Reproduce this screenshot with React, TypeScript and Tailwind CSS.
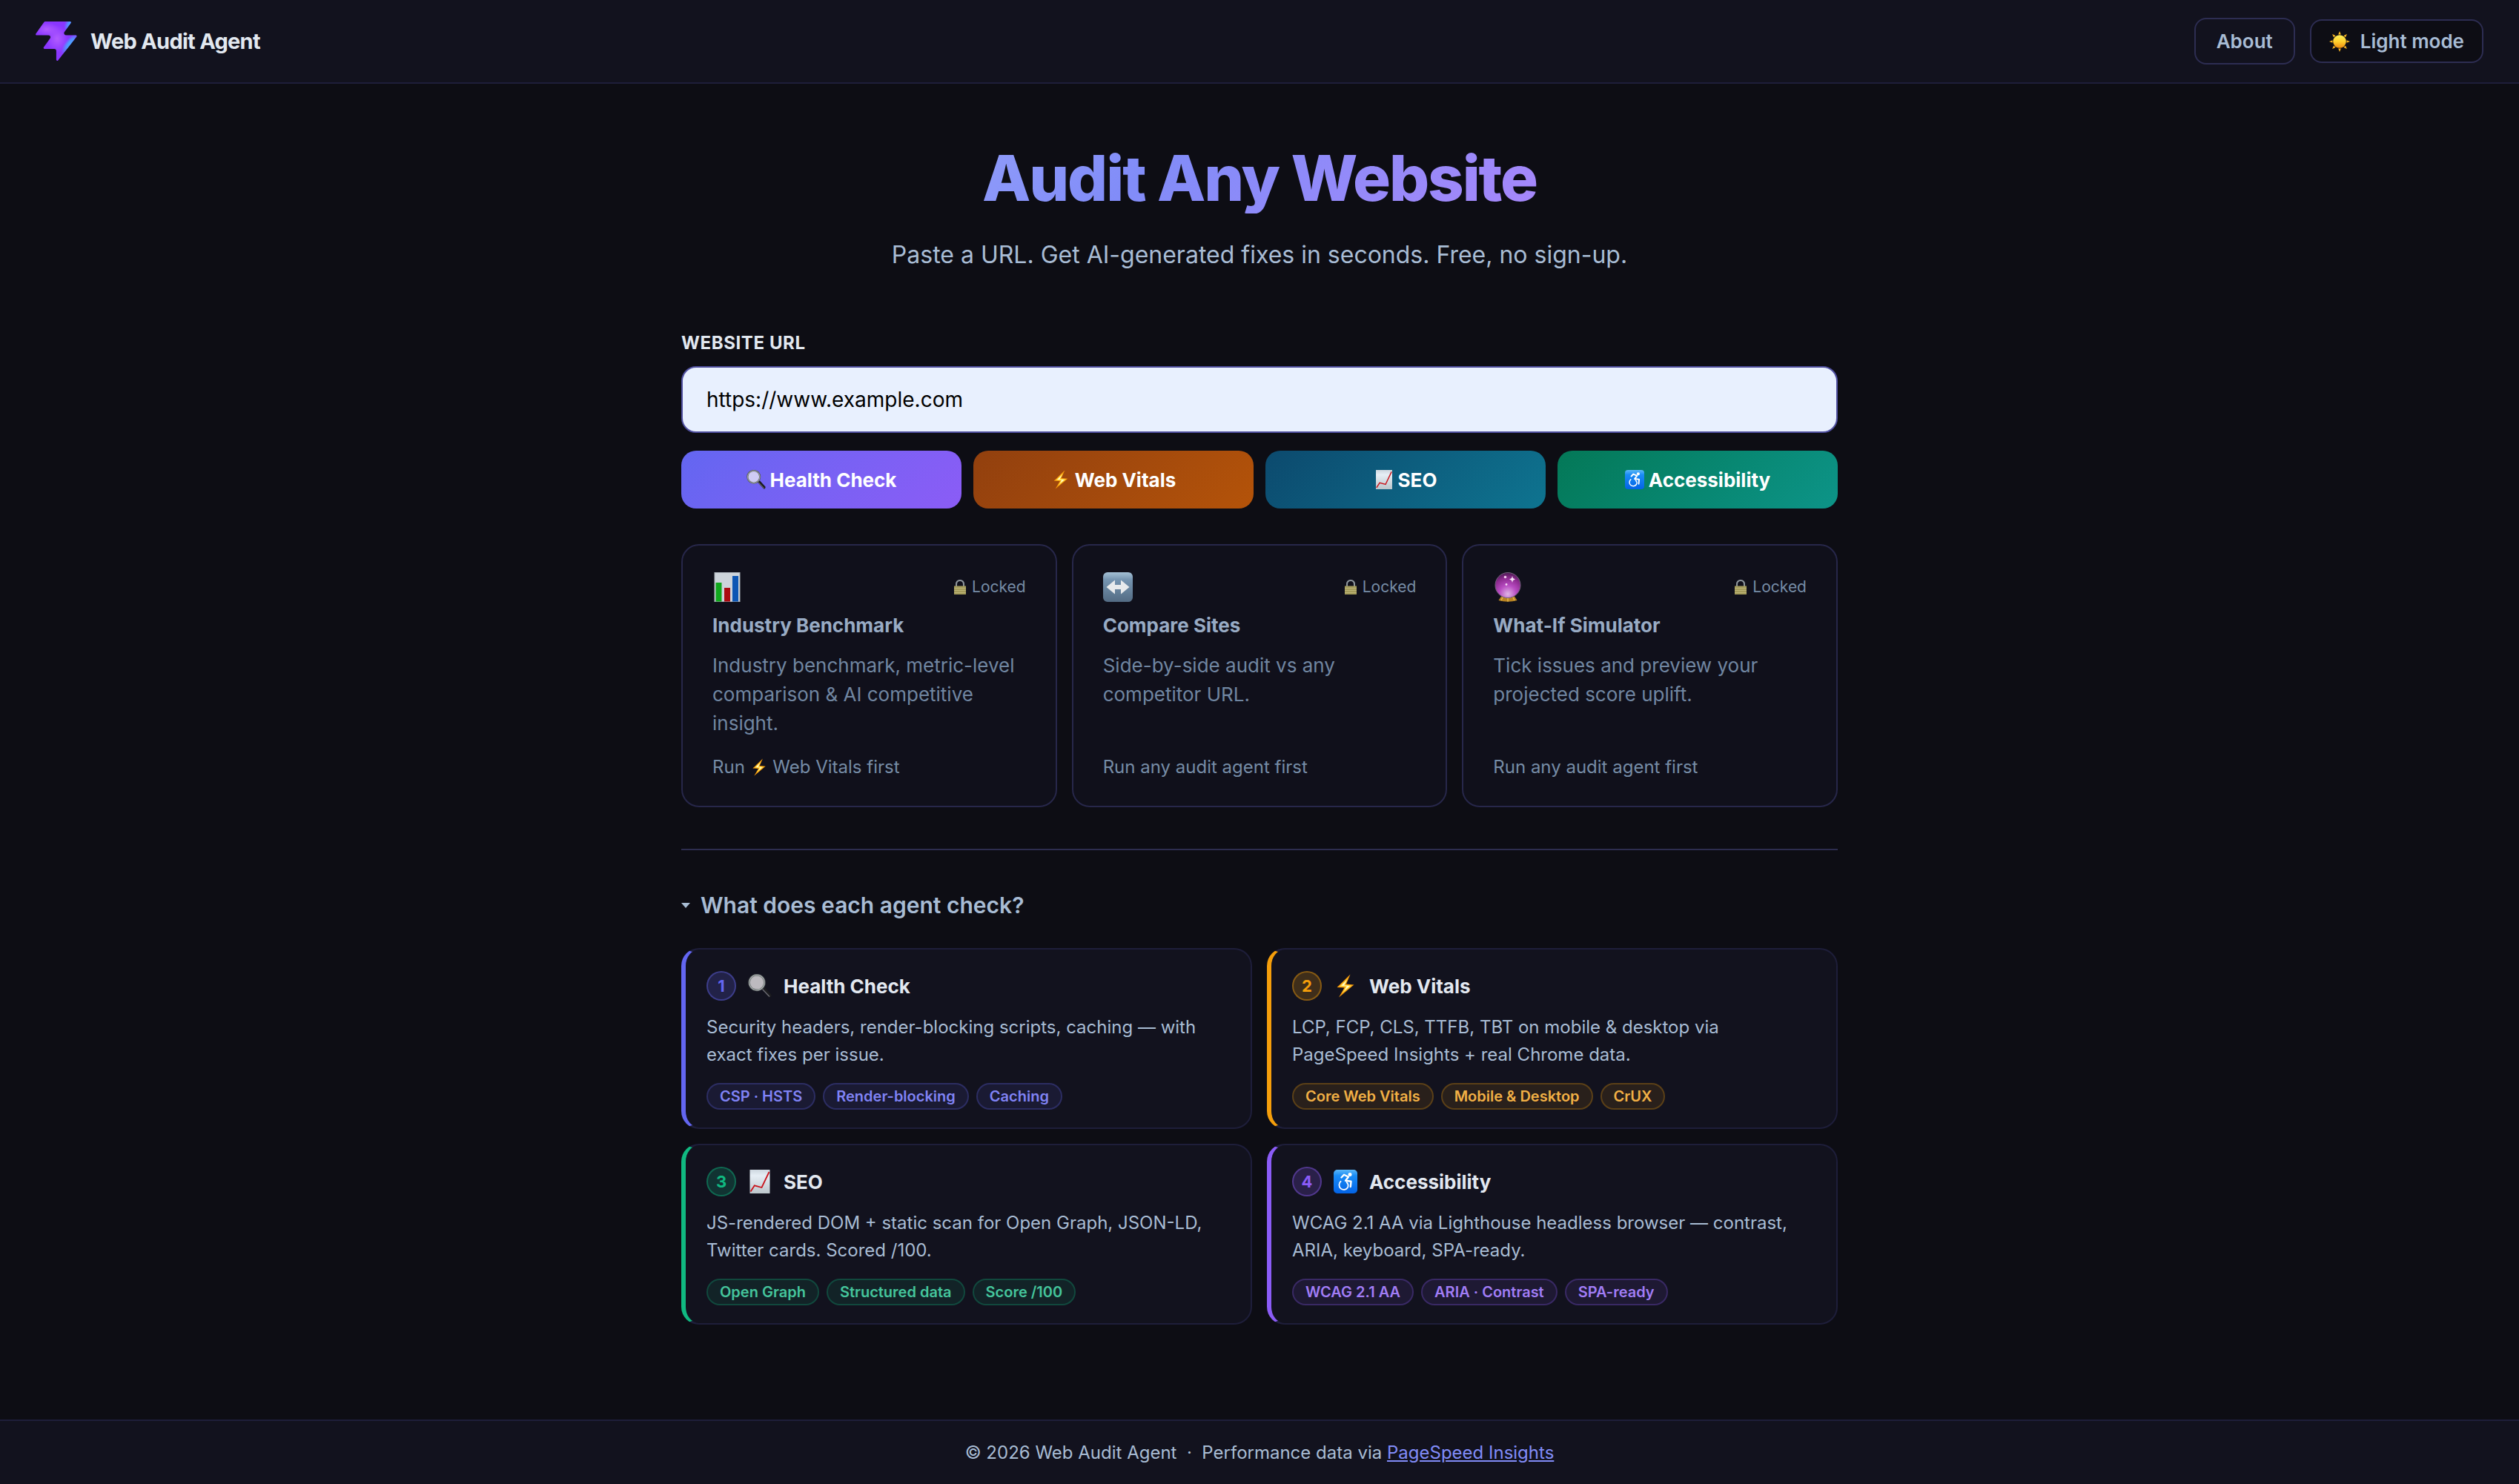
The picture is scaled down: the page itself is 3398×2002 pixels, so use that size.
import { useState } from "react"
import type { ReactNode } from "react"

interface LockedTool {
  icon: ReactNode
  name: string
  description: string
  hint: ReactNode
}

interface Agent {
  id: number
  icon: ReactNode
  name: string
  description: string
  tags: string[]
  border: string
  badge: string
  tag: string
}

function Logo() {
  return (
    <svg viewBox="0 0 48 46" className="w-14" aria-hidden="true">
      <defs>
        <clipPath id="bolt-shape">
          <path d="M25.946 44.938c-.664.845-2.021.375-2.021-.698V33.937a2.26 2.26 0 0 0-2.262-2.262H10.287c-.92 0-1.456-1.04-.92-1.788l7.48-10.471c1.07-1.497 0-3.578-1.842-3.578H1.237c-.92 0-1.456-1.04-.92-1.788L10.013.474c.214-.297.556-.474.92-.474h28.894c.92 0 1.456 1.04.92 1.788l-7.48 10.471c-1.07 1.498 0 3.579 1.842 3.579h11.377c.943 0 1.473 1.088.89 1.83L25.947 44.94z" />
        </clipPath>
        <radialGradient id="bolt-lilac">
          <stop offset="0" stopColor="#b15cff" />
          <stop offset="1" stopColor="#b15cff" stopOpacity="0" />
        </radialGradient>
        <radialGradient id="bolt-sky">
          <stop offset="0" stopColor="#47a8ff" />
          <stop offset="0.4" stopColor="#47a8ff" stopOpacity="0.85" />
          <stop offset="1" stopColor="#47a8ff" stopOpacity="0" />
        </radialGradient>
      </defs>
      <g clipPath="url(#bolt-shape)">
        <rect width="48" height="46" fill="#8a36ff" />
        <ellipse cx="13" cy="9" rx="14" ry="8" fill="url(#bolt-lilac)" />
        <ellipse cx="25" cy="20" rx="13" ry="16" fill="url(#bolt-lilac)" />
        <ellipse cx="41" cy="3" rx="7" ry="11" fill="url(#bolt-sky)" transform="rotate(30 41 3)" />
        <ellipse cx="40" cy="26" rx="6" ry="15" fill="url(#bolt-sky)" transform="rotate(38 40 26)" />
      </g>
    </svg>
  )
}

function SunIcon() {
  return (
    <svg viewBox="0 0 28 28" className="size-7" aria-hidden="true">
      <defs>
        <linearGradient id="sun" x1="0" y1="0" x2="0" y2="1">
          <stop offset="0" stopColor="#ffef5a" />
          <stop offset="0.5" stopColor="#ffd02c" />
          <stop offset="1" stopColor="#f08c12" />
        </linearGradient>
      </defs>
      {[0, 45, 90, 135, 180, 225, 270, 315].map((angle) => (
        <path key={angle} d="M12.2 4.5 L14 0 L15.8 4.5 Z" fill="#f9b421" transform={`rotate(${angle} 14 14)`} />
      ))}
      <circle cx="14" cy="14" r="8.8" fill="url(#sun)" />
    </svg>
  )
}

function SearchIcon({ className, lens }: { className: string; lens: string }) {
  return (
    <svg viewBox="0 0 32 32" className={className} aria-hidden="true">
      <path d="M18 20 L22 17.5 L31.5 28 Q31.5 31.5 28.5 31.5 Z" fill="#1c1c20" />
      <path d="M19.5 20.5 L29 30.5" stroke="#6a6a72" strokeWidth="1.4" />
      <circle cx="12" cy="11.5" r="10.4" fill={lens} stroke="#55595c" strokeWidth="2.6" />
      <circle cx="12" cy="11.5" r="10.2" fill="none" stroke="#a9b0ae" strokeWidth="1.2" />
    </svg>
  )
}

function BoltIcon({ className }: { className: string }) {
  return (
    <svg viewBox="0 0 32 32" className={className} aria-hidden="true">
      <path d="M22.5 0.5 L4.5 18 L14.5 18.6 L7 31.5 L27.5 14.4 L17 13.4 Z" fill="#f59a0c" />
      <path d="M19.5 5.5 L7.8 16.8 L16.6 17.2 L11.5 26 L24.5 15.4 L15 14.7 Z" fill="#ffe14d" />
      <path d="M17.5 8.8 L10.6 15.6 L18 16.2 L14.8 21.8 L21.5 16.2 L13.8 15.6 Z" fill="#fffbd6" />
    </svg>
  )
}

function ChartUpIcon({ className }: { className: string }) {
  return (
    <svg viewBox="0 0 32 32" className={className} aria-hidden="true">
      <defs>
        <linearGradient id="paper" x1="0" y1="0" x2="0" y2="1">
          <stop offset="0" stopColor="#cdd7df" />
          <stop offset="0.25" stopColor="#e6eef5" />
          <stop offset="1" stopColor="#bcc6cb" />
        </linearGradient>
      </defs>
      <rect x="2.5" width="27" height="32" fill="url(#paper)" />
      <path d="M3.5 29.5 L8.8 21.3 L18.5 24 L28.5 3" fill="none" stroke="#c9131b" strokeWidth="1.8" />
    </svg>
  )
}

function WheelchairIcon({ className }: { className: string }) {
  return (
    <svg viewBox="0 0 32 32" className={className} aria-hidden="true">
      <defs>
        <linearGradient id="blue-tile" x1="0" y1="0" x2="0" y2="1">
          <stop offset="0" stopColor="#5db8f8" />
          <stop offset="0.25" stopColor="#1a8cf5" />
          <stop offset="1" stopColor="#0363e6" />
        </linearGradient>
      </defs>
      <rect width="32" height="32" rx="5" fill="url(#blue-tile)" />
      <circle cx="22" cy="6.6" r="2.5" fill="#fff" />
      <path
        d="M10.5 10.5 L14 6.8 L20 9.8 L16 14.8 L23.5 15.8 L22.8 23"
        fill="none"
        stroke="#fff"
        strokeWidth="2.4"
        strokeLinejoin="round"
        strokeLinecap="round"
      />
      <path
        d="M9.6 15.8 A6.3 6.3 0 1 0 19 24 A6.3 6.3 0 0 0 17.6 17"
        fill="none"
        stroke="#fff"
        strokeWidth="1.8"
        strokeLinecap="round"
      />
    </svg>
  )
}

function BarChartIcon() {
  return (
    <svg viewBox="0 0 40 40" className="size-10" aria-hidden="true">
      <rect x="2.5" width="35" height="40" fill="#a9b1b8" />
      <rect x="3.5" y="1" width="33" height="38" fill="#cdd4db" />
      <rect x="4.5" y="14" width="8" height="25.5" fill="#10a81d" />
      <rect x="16" y="21" width="8" height="18.5" fill="#ab0a10" />
      <rect x="27" y="5" width="8" height="34.5" fill="#0d56b4" />
    </svg>
  )
}

function ArrowsIcon() {
  return (
    <svg viewBox="0 0 40 40" className="size-10" aria-hidden="true">
      <defs>
        <linearGradient id="steel-tile" x1="0" y1="0" x2="0" y2="1">
          <stop offset="0" stopColor="#a5c1d6" />
          <stop offset="0.25" stopColor="#7695b1" />
          <stop offset="1" stopColor="#536b83" />
        </linearGradient>
      </defs>
      <rect width="40" height="40" rx="6" fill="url(#steel-tile)" />
      <path d="M4.5 20 L16 10.5 V17 H24 V10.5 L35.5 20 L24 29.5 V23 H16 V29.5 Z" fill="#e8eaec" />
    </svg>
  )
}

function CrystalBallIcon() {
  return (
    <svg viewBox="0 0 40 40" className="size-10" aria-hidden="true">
      <defs>
        <radialGradient id="crystal" cx="0.5" cy="0.85" r="0.85">
          <stop offset="0" stopColor="#dfb6e6" />
          <stop offset="0.4" stopColor="#b84cc2" />
          <stop offset="0.75" stopColor="#8c2a8f" />
          <stop offset="1" stopColor="#4d1a52" />
        </radialGradient>
      </defs>
      <path d="M11 32.5 H29 L32.5 38 Q20 41.5 7.5 38 Z" fill="#b78222" />
      <path d="M11 38 L13 34 M20 39.5 V34 M29 38 L27 34" stroke="#e2b64c" strokeWidth="1.5" />
      <circle cx="20" cy="17.5" r="17" fill="url(#crystal)" stroke="#75627f" strokeWidth="1" />
      <circle cx="16.5" cy="6.5" r="1.8" fill="#f3c9ee" />
      <circle cx="18" cy="16.5" r="1.4" fill="#f3d5f2" />
      <path d="M26 5 L27 8 L30 9.5 L27 11 L26 14 L25 11 L22 9.5 L25 8 Z" fill="#f6e2f6" />
    </svg>
  )
}

function LockIcon() {
  return (
    <svg viewBox="0 0 20 20" className="size-5" aria-hidden="true">
      <path d="M5 9.5 V6.5 Q5 1 10 1 Q15 1 15 6.5 V9.5" fill="none" stroke="#8f979e" strokeWidth="2" />
      <rect x="2" y="8.5" width="16" height="11.5" fill="#a39a5a" />
      <path d="M2 11.5 H18 M2 14.5 H18 M2 17.5 H18" stroke="#bcb476" strokeWidth="1" />
    </svg>
  )
}

const auditButtons = [
  {
    name: "Health Check",
    icon: <SearchIcon className="size-[26px]" lens="#cfcbf5" />,
    color: "from-[#6366f1] to-[#8b5cf6]",
  },
  {
    name: "Web Vitals",
    icon: <BoltIcon className="size-[26px]" />,
    color: "from-[#92400e] to-[#b45309]",
  },
  {
    name: "SEO",
    icon: <ChartUpIcon className="size-[26px]" />,
    color: "from-[#0c4a6e] to-[#0e7490]",
  },
  {
    name: "Accessibility",
    icon: <WheelchairIcon className="size-[26px]" />,
    color: "from-[#047857] to-[#0d9488]",
  },
]

const lockedTools: LockedTool[] = [
  {
    icon: <BarChartIcon />,
    name: "Industry Benchmark",
    description: "Industry benchmark, metric-level comparison & AI competitive insight.",
    hint: (
      <>
        Run <BoltIcon className="inline size-6 align-[-4px]" /> Web Vitals first
      </>
    ),
  },
  {
    icon: <ArrowsIcon />,
    name: "Compare Sites",
    description: "Side-by-side audit vs any competitor URL.",
    hint: "Run any audit agent first",
  },
  {
    icon: <CrystalBallIcon />,
    name: "What-If Simulator",
    description: "Tick issues and preview your projected score uplift.",
    hint: "Run any audit agent first",
  },
]

const agents: Agent[] = [
  {
    id: 1,
    icon: <SearchIcon className="size-8" lens="#bdbabf" />,
    name: "Health Check",
    description: "Security headers, render-blocking scripts, caching — with exact fixes per issue.",
    tags: ["CSP · HSTS", "Render-blocking", "Caching"],
    border: "border-l-[#6366f1]",
    badge: "border-[#6366f1]/40 bg-[#6366f1]/20 text-[#6366f1]",
    tag: "border-[#6366f1]/25 bg-[#6366f1]/10 text-[#8083f5]",
  },
  {
    id: 2,
    icon: <BoltIcon className="size-8" />,
    name: "Web Vitals",
    description: "LCP, FCP, CLS, TTFB, TBT on mobile & desktop via PageSpeed Insights + real Chrome data.",
    tags: ["Core Web Vitals", "Mobile & Desktop", "CrUX"],
    border: "border-l-[#f59e0b]",
    badge: "border-[#f59e0b]/40 bg-[#f59e0b]/20 text-[#f59e0b]",
    tag: "border-[#f59e0b]/25 bg-[#f59e0b]/10 text-[#f2b045]",
  },
  {
    id: 3,
    icon: <ChartUpIcon className="size-8" />,
    name: "SEO",
    description: "JS-rendered DOM + static scan for Open Graph, JSON-LD, Twitter cards. Scored /100.",
    tags: ["Open Graph", "Structured data", "Score /100"],
    border: "border-l-[#10b981]",
    badge: "border-[#10b981]/40 bg-[#10b981]/20 text-[#10b981]",
    tag: "border-[#10b981]/25 bg-[#10b981]/10 text-[#45c59c]",
  },
  {
    id: 4,
    icon: <WheelchairIcon className="size-8" />,
    name: "Accessibility",
    description: "WCAG 2.1 AA via Lighthouse headless browser — contrast, ARIA, keyboard, SPA-ready.",
    tags: ["WCAG 2.1 AA", "ARIA · Contrast", "SPA-ready"],
    border: "border-l-[#8b5cf6]",
    badge: "border-[#8b5cf6]/40 bg-[#8b5cf6]/20 text-[#8b5cf6]",
    tag: "border-[#8b5cf6]/25 bg-[#8b5cf6]/10 text-[#a17df6]",
  },
]

export default function App() {
  const [url, setUrl] = useState("https://www.example.com")

  return (
    <div className="flex min-h-screen flex-col bg-[#0d0d14] font-['Inter',sans-serif] text-[#a8bcd4]">
      <header className="flex items-center justify-between border-b-2 border-[#1e1e3a] bg-[#12121e] px-12 py-6">
        <div className="flex items-center gap-[18px]">
          <Logo />
          <span className="text-[29px] leading-10 font-bold tracking-tight text-[#e2e8f0]">Web Audit Agent</span>
        </div>
        <nav className="flex items-center gap-5">
          <a
            href="#about"
            className="rounded-2xl border-2 border-[#2d2d52] px-7 py-3 text-[26px] leading-[35px] font-semibold"
          >
            About
          </a>
          <button
            type="button"
            className="flex items-center gap-3.5 rounded-2xl border-2 border-[#2d2d52] bg-[#0d0d14] px-6 py-3 text-[26px] leading-[31px] font-semibold"
          >
            <SunIcon />
            Light mode
          </button>
        </nav>
      </header>

      <main className="mx-auto w-full max-w-[1560px] flex-1 pt-20 pb-32">
        <div className="text-center">
          <h1 className="bg-[linear-gradient(135deg,#a5b4fc_0%,#818cf8_40%,#c084fc_100%)] bg-clip-text text-[85px] leading-[95px] font-extrabold tracking-tight text-transparent">
            Audit Any Website
          </h1>
          <p className="mt-8 text-[32px] leading-[48px]">
            Paste a URL. Get AI-generated fixes in seconds. Free, no sign-up.
          </p>
        </div>

        <form className="mt-20" onSubmit={(e) => e.preventDefault()}>
          <label
            htmlFor="url"
            className="mb-4 block text-2xl leading-[30px] font-bold tracking-wide text-[#e2e8f0] uppercase"
          >
            Website URL
          </label>
          <input
            id="url"
            type="url"
            value={url}
            onChange={(e) => setUrl(e.target.value)}
            className="h-[90px] w-full rounded-[20px] border-2 border-[#5050a0] bg-[#e8f0fe] px-8 text-[28px] text-black outline-none"
          />
          <div className="mt-6 grid grid-cols-4 gap-4">
            {auditButtons.map((button) => (
              <button
                key={button.name}
                type="submit"
                className={`flex h-[78px] items-center justify-center gap-1.5 rounded-[20px] bg-linear-135 text-[26px] font-bold text-white ${button.color}`}
              >
                {button.icon}
                {button.name}
              </button>
            ))}
          </div>
        </form>

        <section className="mt-12 grid grid-cols-3 gap-5">
          {lockedTools.map((tool) => (
            <article
              key={tool.name}
              className="flex flex-col rounded-3xl border-2 border-[#27274a] bg-[#10101b] px-10 pt-9 pb-[34px]"
            >
              <div className="flex items-center justify-between">
                {tool.icon}
                <span className="flex items-center gap-1.5 text-[21px] leading-8 text-[#768ca6]">
                  <LockIcon />
                  Locked
                </span>
              </div>
              <h2 className="mt-3 text-[26px] leading-10 font-bold text-[#98abc4]">{tool.name}</h2>
              <p className="mt-3.5 text-[26px] leading-[39px] text-[#7086a1]">{tool.description}</p>
              <p className="mt-auto pt-[22px] text-2xl leading-9 text-[#768ca6]">{tool.hint}</p>
            </article>
          ))}
        </section>

        <details open className="mt-14 border-t-2 border-[#2d2d4f] pt-12">
          <summary className="flex cursor-pointer list-none items-center gap-3.5 text-[30px] leading-[52px] font-semibold">
            <svg viewBox="0 0 12 7" className="w-3" aria-hidden="true">
              <path d="M0 0 H12 L6 7 Z" fill="currentColor" />
            </svg>
            What does each agent check?
          </summary>
          <div className="mt-8 grid grid-cols-2 gap-5">
            {agents.map((agent) => (
              <article
                key={agent.id}
                className={`rounded-3xl border-2 border-l-6 border-[#1e1e3a] bg-[#12121e] px-7 py-6 ${agent.border}`}
              >
                <div className="flex h-[50px] items-center gap-4">
                  <span
                    className={`flex size-10 items-center justify-center rounded-full border-2 text-[22px] font-bold ${agent.badge}`}
                  >
                    {agent.id}
                  </span>
                  {agent.icon}
                  <h3 className="text-[26px] font-bold text-[#e2e8f0]">{agent.name}</h3>
                </div>
                <p className="mt-3 text-2xl leading-[37px]">{agent.description}</p>
                <ul className="mt-5 flex flex-wrap gap-2.5">
                  {agent.tags.map((tag) => (
                    <li
                      key={tag}
                      className={`rounded-full border-2 px-4 text-xl leading-8 font-semibold ${agent.tag}`}
                    >
                      {tag}
                    </li>
                  ))}
                </ul>
              </article>
            ))}
          </div>
        </details>
      </main>

      <footer className="border-t-2 border-[#1e1e3a] bg-[#12121e] py-6 text-center text-2xl leading-[37px]">
        © 2026 Web Audit Agent &nbsp;·&nbsp; Performance data via{" "}
        <a href="#pagespeed" className="text-[#818cf8] underline">
          PageSpeed Insights
        </a>
      </footer>
    </div>
  )
}
